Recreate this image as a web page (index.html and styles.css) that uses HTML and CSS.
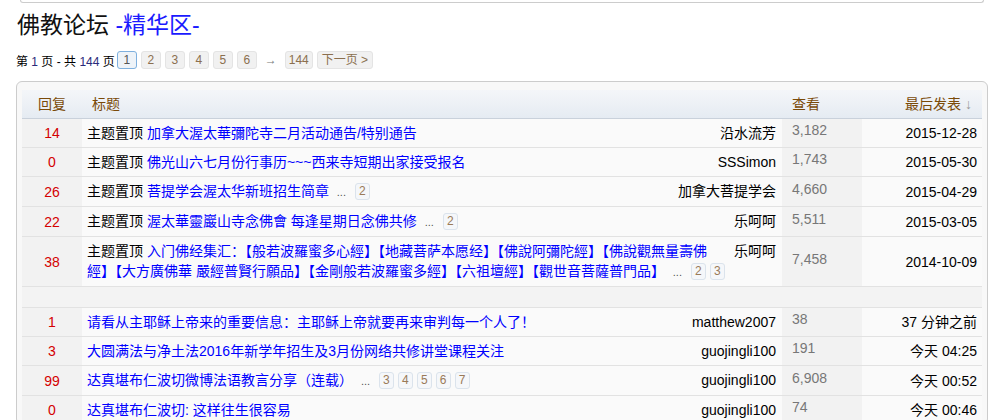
FILE: index.html
```html
<!DOCTYPE html>
<html lang="zh-CN">
<head>
    <meta charset="UTF-8">
    <title>佛教论坛 - 精华区</title>
    <link rel="stylesheet" href="styles.css">
</head>
<body>
    <div class="top-box"></div>

    <h1 class="forum-title">佛教论坛 <span class="sub">-精华区-</span></h1>

    <div class="pager">
        <span class="pager-info">第 <b>1</b> 页 - 共 <b>144</b> 页</span>
        <a class="pg current">1</a>
        <a class="pg">2</a>
        <a class="pg">3</a>
        <a class="pg">4</a>
        <a class="pg">5</a>
        <a class="pg">6</a>
        <span class="arrow">→</span>
        <a class="pg">144</a>
        <a class="pg next">下一页 &gt;</a>
    </div>

    <div class="topic-box">
        <table class="topics">
            <colgroup>
                <col class="c-reply">
                <col class="c-title">
                <col class="c-views">
                <col class="c-last">
            </colgroup>
            <thead>
                <tr>
                    <th class="reply">回复</th>
                    <th class="title">标题</th>
                    <th class="views">查看</th>
                    <th class="last">最后发表 <span class="sort">↓</span></th>
                </tr>
            </thead>
            <tbody>
                <tr>
                    <td class="reply">14</td>
                    <td class="title"><span class="author">沿水流芳</span>主题置顶 <a href="#">加拿大渥太華彌陀寺二月活动通告/特别通告</a></td>
                    <td class="views">3,182</td>
                    <td class="last">2015-12-28</td>
                </tr>
                <tr>
                    <td class="reply">0</td>
                    <td class="title"><span class="author">SSSimon</span>主题置顶 <a href="#">佛光山六七月份行事历~~~西来寺短期出家接受报名</a></td>
                    <td class="views">1,743</td>
                    <td class="last">2015-05-30</td>
                </tr>
                <tr>
                    <td class="reply">26</td>
                    <td class="title"><span class="author">加拿大菩提学会</span>主题置顶 <a href="#">菩提学会渥太华新班招生简章</a> <span class="more">...</span> <a class="mini">2</a></td>
                    <td class="views">4,660</td>
                    <td class="last">2015-04-29</td>
                </tr>
                <tr>
                    <td class="reply">22</td>
                    <td class="title"><span class="author">乐呵呵</span>主题置顶 <a href="#">渥太華靈巖山寺念佛會 每逢星期日念佛共修</a> <span class="more">...</span> <a class="mini">2</a></td>
                    <td class="views">5,511</td>
                    <td class="last">2015-03-05</td>
                </tr>
                <tr>
                    <td class="reply">38</td>
                    <td class="title"><span class="author">乐呵呵</span>主题置顶 <a href="#">入门佛经集汇：【般若波羅蜜多心經】【地藏菩萨本愿经】【佛說阿彌陀經】【佛說觀無量壽佛<br>經】【大方廣佛華 嚴經普賢行願品】【金剛般若波羅蜜多經】【六祖壇經】【觀世音菩薩普門品】</a> <span class="more">...</span> <a class="mini">2</a> <a class="mini">3</a></td>
                    <td class="views">7,458</td>
                    <td class="last">2014-10-09</td>
                </tr>
                <tr class="gap">
                    <td colspan="4"></td>
                </tr>
                <tr>
                    <td class="reply">1</td>
                    <td class="title"><span class="author">matthew2007</span><a href="#">请看从主耶稣上帝来的重要信息：主耶稣上帝就要再来审判每一个人了！</a></td>
                    <td class="views">38</td>
                    <td class="last">37 分钟之前</td>
                </tr>
                <tr>
                    <td class="reply">3</td>
                    <td class="title"><span class="author">guojingli100</span><a href="#">大圆满法与净土法2016年新学年招生及3月份网络共修讲堂课程关注</a></td>
                    <td class="views">191</td>
                    <td class="last">今天 04:25</td>
                </tr>
                <tr>
                    <td class="reply">99</td>
                    <td class="title"><span class="author">guojingli100</span><a href="#">达真堪布仁波切微博法语教言分享（连载）</a> <span class="more">...</span> <a class="mini">3</a> <a class="mini">4</a> <a class="mini">5</a> <a class="mini">6</a> <a class="mini">7</a></td>
                    <td class="views">6,908</td>
                    <td class="last">今天 00:52</td>
                </tr>
                <tr>
                    <td class="reply">0</td>
                    <td class="title"><span class="author">guojingli100</span><a href="#">达真堪布仁波切: 这样往生很容易</a></td>
                    <td class="views">74</td>
                    <td class="last">今天 00:46</td>
                </tr>
            </tbody>
        </table>
    </div>
</body>
</html>
```

FILE: styles.css
```css
body {
    margin: 0;
    background-color: #ffffff;
    color: #000000;
    font-family: "Liberation Sans", Arial, "Noto Sans CJK SC", sans-serif;
    font-size: 12px;
}

a {
    color: #0000ff;
    text-decoration: none;
}

.top-box {
    height: 2px;
    margin: 0 17px 0 20px;
    border: 1px solid #cccccc;
    border-top: none;
    border-radius: 0 0 6px 6px;
}

.forum-title {
    margin: 7px 0 0 17px;
    font-size: 23px;
    font-weight: normal;
    line-height: 30px;
    color: #111111;
}

.forum-title .sub {
    color: #1a1aff;
}

.pager {
    display: flex;
    align-items: center;
    gap: 4px;
    margin: 11px 0 0 16px;
    height: 18px;
}

.pager-info {
    margin-right: -2px;
    color: #000000;
}

.pager-info b {
    font-weight: normal;
    color: #2a2a7a;
}

.pg {
    box-sizing: border-box;
    height: 18px;
    min-width: 20px;
    padding: 0 3px;
    border: 1px solid #e4e4e4;
    border-radius: 3px;
    background-color: #f1f1f1;
    color: #8b6f4e;
    font-size: 12px;
    line-height: 16px;
    text-align: center;
}

.pg.current {
    border-color: #7fb0de;
    background-color: #eef3f8;
    color: #555555;
}

.pg.next {
    padding: 0 4px;
}

.arrow {
    margin: 0 4px 0 4px;
    color: #777777;
}

.topic-box {
    margin: 12px 13px 0 16px;
    padding: 8px 5px 0;
    border: 1px solid #cccccc;
    border-radius: 6px;
    background-color: #f8f8f8;
}

.topics {
    width: 100%;
    table-layout: fixed;
    border-collapse: collapse;
    font-size: 14px;
    line-height: 20px;
}

.c-reply { width: 60px; }
.c-views { width: 80px; }
.c-last { width: 120px; }

.topics th {
    height: 28px;
    padding: 0 5px;
    font-weight: normal;
    color: #7a4a08;
    text-align: left;
    background: linear-gradient(#f4f6f9, #e5ebf2);
    border-bottom: 1px solid #c9d1db;
}

.topics th.reply {
    text-align: center;
}

.topics th.title {
    padding-left: 10px;
}

.topics th.views {
    padding-left: 10px;
}

.topics th.last {
    text-align: right;
    padding-right: 10px;
}

.sort {
    color: #999999;
}

.topics td {
    padding: 4px 5px;
    border-top: 1px solid #e2e2e2;
    background-color: #fafafa;
}

.topics td.reply {
    text-align: center;
    color: #d40000;
    background-color: #f2f2f2;
}

.topics td.title {
    padding-right: 6px;
}

.author {
    float: right;
    color: #000000;
}

.more {
    margin: 0 5px 0 4px;
    font-size: 11px;
    color: #555555;
}

.mini {
    display: inline-block;
    box-sizing: border-box;
    height: 17px;
    min-width: 15px;
    padding: 0 2px;
    border: 1px solid #dbe3ec;
    border-radius: 3px;
    background-color: #f5f7fa;
    color: #9a7a58;
    font-size: 12px;
    line-height: 15px;
    text-align: center;
    vertical-align: 1px;
}

.topics td.views {
    padding: 1px 5px 7px 10px;
    color: #777777;
    background-color: #f2f2f2;
}

.topics td.last {
    text-align: right;
    padding-right: 5px;
}

.topics tr.gap td {
    height: 20px;
    padding: 0;
    background-color: #f3f3f3;
}
```
